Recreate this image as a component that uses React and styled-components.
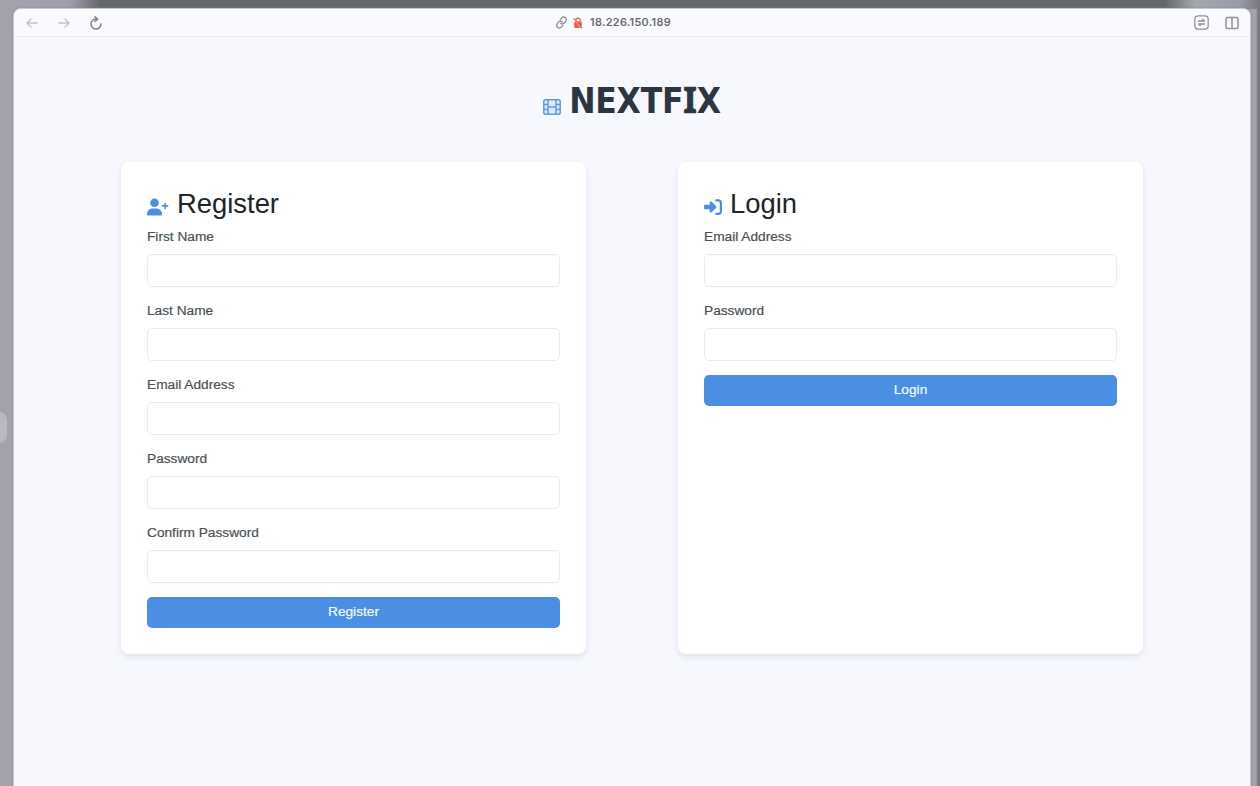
import React from "react";
import styled, { createGlobalStyle } from "styled-components";
import { FaRightToBracket } from "react-icons/fa6";

const GlobalStyle = createGlobalStyle`
  * { box-sizing: border-box; }
  body { margin: 0; overflow: hidden; font-family: "Liberation Sans", Arial, sans-serif; }
`;

const Desktop = styled.div`
  position: relative;
  height: 786px;
  padding: 9px 10px 0 14px;
  overflow: hidden;
  background:
    linear-gradient(90deg, #a5a4ae 0, #a09fa9 70px, #65656e 100px, #65656e 1165px, #a6a6af 1195px, #9b9ba5 1240px, #77777f 1260px) top / 100% 9px no-repeat,
    linear-gradient(90deg, #a3a2ac 0, #a3a2ac 1256px, #77777d 1258px);
`;

const EdgeHandle = styled.div`
  position: absolute;
  left: -9px;
  top: 412px;
  width: 16px;
  height: 31px;
  border-radius: 8px;
  background: #b9b9c0;
`;

const Window = styled.div`
  height: 777px;
  border-radius: 7px 7px 0 0;
  background: #f6f8fe;
  box-shadow: 0 0 0 1px #c6c8cf, 0 0 2px 1px #85858e;
`;

const Toolbar = styled.header`
  display: grid;
  grid-template-columns: 530px auto 1fr;
  align-items: center;
  height: 28px;
  padding: 0 11px;
  border-bottom: 1px solid #edeff4;
  border-radius: 7px 7px 0 0;
  background: #f9fafe;
`;

const ToolGroup = styled.div`
  display: flex;
  align-items: center;
  justify-content: ${(p) => (p.$end ? "flex-end" : "flex-start")};
  gap: ${(p) => p.$gap}px;
`;

const Address = styled.div`
  display: flex;
  align-items: center;
  gap: 5px;
  color: #66686d;
  font: 500 11px/14px Inter, sans-serif;
  letter-spacing: 0.35px;
  -webkit-text-stroke: 0.15px #66686d;
`;

const AddressText = styled.span`
  margin: -1px 0 0 2px;
`;

const Glyph = styled.svg`
  display: block;
  fill: none;
  stroke: ${(p) => p.$color || "#939499"};
  stroke-width: ${(p) => p.$weight || 1.3};
  stroke-linecap: round;
  stroke-linejoin: round;
`;

const Page = styled.main`
  padding: 40px 107px 0;
`;

const Brand = styled.h1`
  display: flex;
  justify-content: center;
  align-items: center;
  gap: 8px;
  height: 48px;
  margin: 0 0 37px;
  color: #2d3640;
  font: 700 35px/48px "DejaVu Sans Condensed", "DejaVu Sans", sans-serif;
  font-stretch: condensed;

  svg { margin-top: 12px; }
`;

const BrandName = styled.span`
  display: block;
  height: 48px;
  white-space: nowrap;
  letter-spacing: -0.2px;
`;

const SlabLetter = styled.span`
  font-family: "Noto Sans", sans-serif;
  line-height: 1;
  -webkit-text-stroke: 0.7px #2d3640;
`;

const Cards = styled.div`
  display: grid;
  grid-template-columns: 465px 465px;
  justify-content: space-between;
`;

const Card = styled.form`
  height: 492px;
  padding: 25px 26px;
  border-radius: 8px;
  background: #fff;
  box-shadow: 0 3px 6px rgba(50, 60, 80, 0.11);
`;

const CardTitle = styled.h2`
  display: flex;
  align-items: center;
  gap: 8px;
  height: 34px;
  margin: 0 0 8px;
  color: #212529;
  font-size: 27.4px;
  font-weight: 400;
  line-height: 34px;

  svg { flex: none; color: #4a90e2; margin-top: 6px; }
`;

const Field = styled.label`
  display: block;
  height: 74px;
  color: #495057;
  font-size: 13.7px;
  line-height: 16px;
  -webkit-text-stroke: 0.2px #495057;
`;

const Input = styled.input`
  display: block;
  width: 100%;
  height: 33px;
  margin-top: 9.4px;
  padding: 5px 10px;
  border: 1px solid #e9ebee;
  border-radius: 5px;
  background: #fff;
  outline: none;
`;

const Button = styled.button`
  display: block;
  width: 100%;
  height: 31px;
  margin-top: -2px;
  padding: 0 0 2px;
  border: 0;
  border-radius: 5px;
  background: #4a8fe3;
  color: #f5f9ff;
  font: 13.7px/29px "Liberation Sans", Arial, sans-serif;
  -webkit-text-stroke: 0.2px #f5f9ff;
`;

const registerFields = [
  ["First Name", "text"],
  ["Last Name", "text"],
  ["Email Address", "email"],
  ["Password", "password"],
  ["Confirm Password", "password"],
];
const loginFields = [
  ["Email Address", "email"],
  ["Password", "password"],
];

function FilmIcon() {
  return (
    <svg width="18" height="16" viewBox="0 0 18 16" fill="none" stroke="#5d9ce8" strokeWidth="1.5">
      <rect x=".8" y=".8" width="16.4" height="14.4" rx="1.8" fill="#dceafb" />
      <path d="M5 1v14M13 1v14M5 8h8M1 5.6h4M1 10.4h4M13 5.6h4M13 10.4h4" />
    </svg>
  );
}

function UserPlusIcon() {
  return (
    <svg width="22" height="18" viewBox="0 0 22 18" fill="#4a90e2">
      <circle cx="7.5" cy="4.7" r="4.3" />
      <path d="M0 16.5C0 12.6 2.4 10.5 6 10.500h3c3.600 0 6 2.100 6 6 0 .7-.4 1-1 1H1c-.6 0-1-.3-1-1Z" />
      <path d="M18.100 5.400v5M15.600 7.900h5" fill="none" stroke="#4a90e2" strokeWidth="1.6" strokeLinecap="round" />
    </svg>
  );
}

function FormCard({ title, icon, fields }) {
  return (
    <Card onSubmit={(e) => e.preventDefault()}>
      <CardTitle>{icon}{title}</CardTitle>
      {fields.map(([label, type]) => (
        <Field key={label}>
          {label}
          <Input type={type} />
        </Field>
      ))}
      <Button type="submit">{title}</Button>
    </Card>
  );
}

export default function App() {
  return (
    <>
      <GlobalStyle />
      <Desktop>
        <EdgeHandle />
        <Window>
          <Toolbar>
            <ToolGroup $gap={18}>
              <Glyph width="14" height="14" viewBox="0 0 14 14" $color="#c2c3c8">
                <path d="M12.2 7H2M6 3 2 7l4 4" />
              </Glyph>
              <Glyph width="14" height="14" viewBox="0 0 14 14" $color="#c2c3c8">
                <path d="M1.8 7H12M8 3l4 4-4 4" />
              </Glyph>
              <Glyph width="14" height="14" viewBox="0 0 14 14" $color="#85868b" $weight={1.6}>
                <path d="M7.5 3.1A5 5 0 1 0 12 8M6 .9 8.6 3.2 6 5.5" />
              </Glyph>
            </ToolGroup>
            <Address>
              <Glyph width="13" height="13" viewBox="0 0 24 24" $color="#85878c" $weight={2.2}>
                <g transform="rotate(-8 12 12)">
                  <path d="M10 13a5 5 0 0 0 7.5.5l3-3a5 5 0 0 0-7-7l-3 3M14 11a5 5 0 0 0-7.5-.5l-3 3a5 5 0 0 0 7 7l3-3" />
                </g>
              </Glyph>
              <Glyph width="10" height="12" viewBox="0 0 10 12" $color="#f3554f" $weight={1.1}>
                <path d="M2.8 5V3.3a2.2 2.2 0 0 1 4.4 0V5" />
                <rect x="1.8" y="5" width="6.4" height="5.5" rx=".8" fill="#f3554f" />
                <path d="m1 1.5 8 9.5" />
                <path d="m2.6 4.7 5 5.7" stroke="#fff" strokeWidth=".6" />
              </Glyph>
              <AddressText>18.226.150.189</AddressText>
            </Address>
            <ToolGroup $gap={16} $end>
              <Glyph width="15" height="15" viewBox="0 0 15 15" $weight={1.3}>
                <rect x=".8" y=".8" width="13.4" height="13.4" rx="3.4" />
                <path d="M4.5 6h6L8.8 4.5M10.5 9h-6l1.7 1.5" />
              </Glyph>
              <Glyph width="14" height="14" viewBox="0 0 14 14" $weight={1.5}>
                <rect x="1" y="1.5" width="12" height="11" rx="1.5" />
                <path d="M7 1.5v11" />
              </Glyph>
            </ToolGroup>
          </Toolbar>
          <Page>
            <Brand>
              <FilmIcon />
              <BrandName>NEXTF<SlabLetter>I</SlabLetter>X</BrandName>
            </Brand>
            <Cards>
              <FormCard title="Register" icon={<UserPlusIcon />} fields={registerFields} />
              <FormCard title="Login" icon={<FaRightToBracket size={18} />} fields={loginFields} />
            </Cards>
          </Page>
        </Window>
      </Desktop>
    </>
  );
}
